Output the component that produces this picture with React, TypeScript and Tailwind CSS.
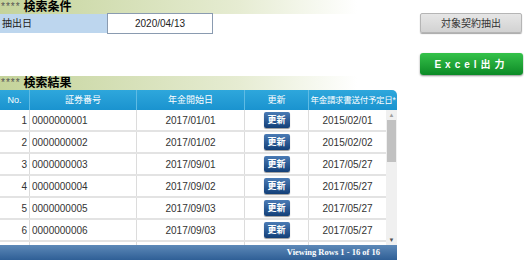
import React from "react";

interface Row {
  no: number;
  policy: string;
  start: string;
  sendDate: string;
}

const rows: Row[] = [
  { no: 1, policy: "0000000001", start: "2017/01/01", sendDate: "2015/02/01" },
  { no: 2, policy: "0000000002", start: "2017/01/02", sendDate: "2015/02/02" },
  { no: 3, policy: "0000000003", start: "2017/09/01", sendDate: "2017/05/27" },
  { no: 4, policy: "0000000004", start: "2017/09/02", sendDate: "2017/05/27" },
  { no: 5, policy: "0000000005", start: "2017/09/03", sendDate: "2017/05/27" },
  { no: 6, policy: "0000000006", start: "2017/09/03", sendDate: "2017/05/27" },
];

const font = "[font-family:'Liberation_Sans','Noto_Sans_CJK_JP',sans-serif]";

function SectionTitle({ label }: { label: string }) {
  return (
    <div className="flex h-[14px] items-center bg-gradient-to-r from-[#c4d39a] via-[#e6ecd2] via-60% to-white to-90% pl-[1px]">
      <span className="text-[10px] leading-none tracking-[1px] text-[#555]">****</span>
      <span className="ml-[3px] text-[12px] font-bold leading-none text-black">{label}</span>
    </div>
  );
}

function UpdateButton() {
  return (
    <button className="flex h-[16px] w-[26px] items-center justify-center rounded-[2px] bg-gradient-to-b from-[#4a7bb5] to-[#123f78] text-[9px] font-bold leading-none text-white shadow-[0_1px_1px_rgba(0,0,0,0.4)]">
      更新
    </button>
  );
}

export default function App() {
  return (
    <div className={`flex h-[260px] w-[524px] overflow-hidden bg-white ${font}`}>
      <div className="flex w-[397px] flex-col">
        <SectionTitle label="検索条件" />
        <div className="flex h-[19px]">
          <div className="flex w-[107px] items-center bg-[#bdd6ee] pl-[2px] text-[10px] text-[#222]">
            抽出日
          </div>
          <div className="-mt-[1px] flex h-[21px] w-[106px] items-center justify-center border border-[#8a9bb0] bg-white text-[10px] text-[#222]">
            2020/04/13
          </div>
        </div>

        <div className="mt-[43px]">
          <SectionTitle label="検索結果" />
        </div>

        <div className="flex h-[20px] whitespace-nowrap rounded-tr-[5px] bg-gradient-to-b from-[#2ea7dc] to-[#1a93cf] text-[9px] leading-none text-white">
          <div className="flex w-[30px] items-center justify-center border-r border-[#5fbbe4]">No.</div>
          <div className="flex w-[107px] items-center justify-center border-r border-[#5fbbe4]">証券番号</div>
          <div className="flex w-[108px] items-center justify-center border-r border-[#5fbbe4]">年金開始日</div>
          <div className="flex w-[64px] items-center justify-center border-r border-[#5fbbe4]">更新</div>
          <div className="flex flex-1 items-center justify-center text-[8.5px] tracking-[-0.3px]">年金請求書送付予定日*</div>
        </div>

        <div className="flex h-[135px] overflow-hidden">
          <div className="w-[386px]">
            {rows.map((r) => (
              <div
                key={r.no}
                className="flex h-[22px] border-b-2 border-[#e3e3e3] text-[10px] text-[#333]"
              >
                <div className="flex w-[30px] items-center justify-end border-r border-[#dcdcdc] pr-[2px]">
                  {r.no}
                </div>
                <div className="flex w-[107px] items-center border-r border-[#dcdcdc] pl-[2px]">
                  {r.policy}
                </div>
                <div className="flex w-[108px] items-center justify-center border-r border-[#dcdcdc]">
                  {r.start}
                </div>
                <div className="flex w-[64px] items-center justify-center border-r border-[#dcdcdc]">
                  <UpdateButton />
                </div>
                <div className="flex flex-1 items-center justify-center">{r.sendDate}</div>
              </div>
            ))}
            {/* next row peeks in under the fold */}
            <div className="flex h-[22px]">
              <div className="w-[30px] border-r border-[#dcdcdc]" />
              <div className="w-[107px] border-r border-[#dcdcdc]" />
              <div className="w-[108px] border-r border-[#dcdcdc]" />
              <div className="flex w-[64px] justify-center border-r border-[#dcdcdc] pt-[3px]">
                <div className="h-[16px] w-[26px] rounded-[2px] bg-[#4a7bb5]" />
              </div>
              <div className="flex-1" />
            </div>
          </div>
          <div className="flex w-[11px] flex-col bg-[#f0f0f0]">
            <div className="flex h-[10px] items-center justify-center text-[6px] leading-none text-[#a0a0a0]">▲</div>
            <div className="mx-[1px] h-[42px] bg-[#c1c1c1]" />
            <div className="flex-1" />
            <div className="flex h-[10px] items-center justify-center text-[6px] leading-none text-[#505050]">▼</div>
          </div>
        </div>

        <div className="flex h-[15px] items-center justify-end bg-gradient-to-b from-[#5d89b8] to-[#2f5f96] pr-[17px] [font-family:'Liberation_Serif',serif] text-[8.5px] font-bold leading-none text-white">
          Viewing Rows 1 - 16 of 16
        </div>
      </div>

      <div className="ml-[23px] flex w-[103px] flex-col pt-[13px]">
        <button className="flex h-[20px] w-[102px] items-center justify-center rounded-[2px] border border-[#b5b5b5] bg-gradient-to-b from-[#e6e6e6] to-[#d2d2d2] text-[10px] text-[#333] shadow-[0_1px_1px_rgba(0,0,0,0.35)]">
          対象契約抽出
        </button>
        <button className="mt-[20px] flex h-[22px] w-[103px] items-center justify-center rounded-[3px] bg-gradient-to-b from-[#34c24a] to-[#0a8a26] text-[10px] font-bold tracking-[4px] text-white shadow-[0_1px_2px_rgba(0,0,0,0.45)]">
          Excel出力
        </button>
      </div>
    </div>
  );
}
